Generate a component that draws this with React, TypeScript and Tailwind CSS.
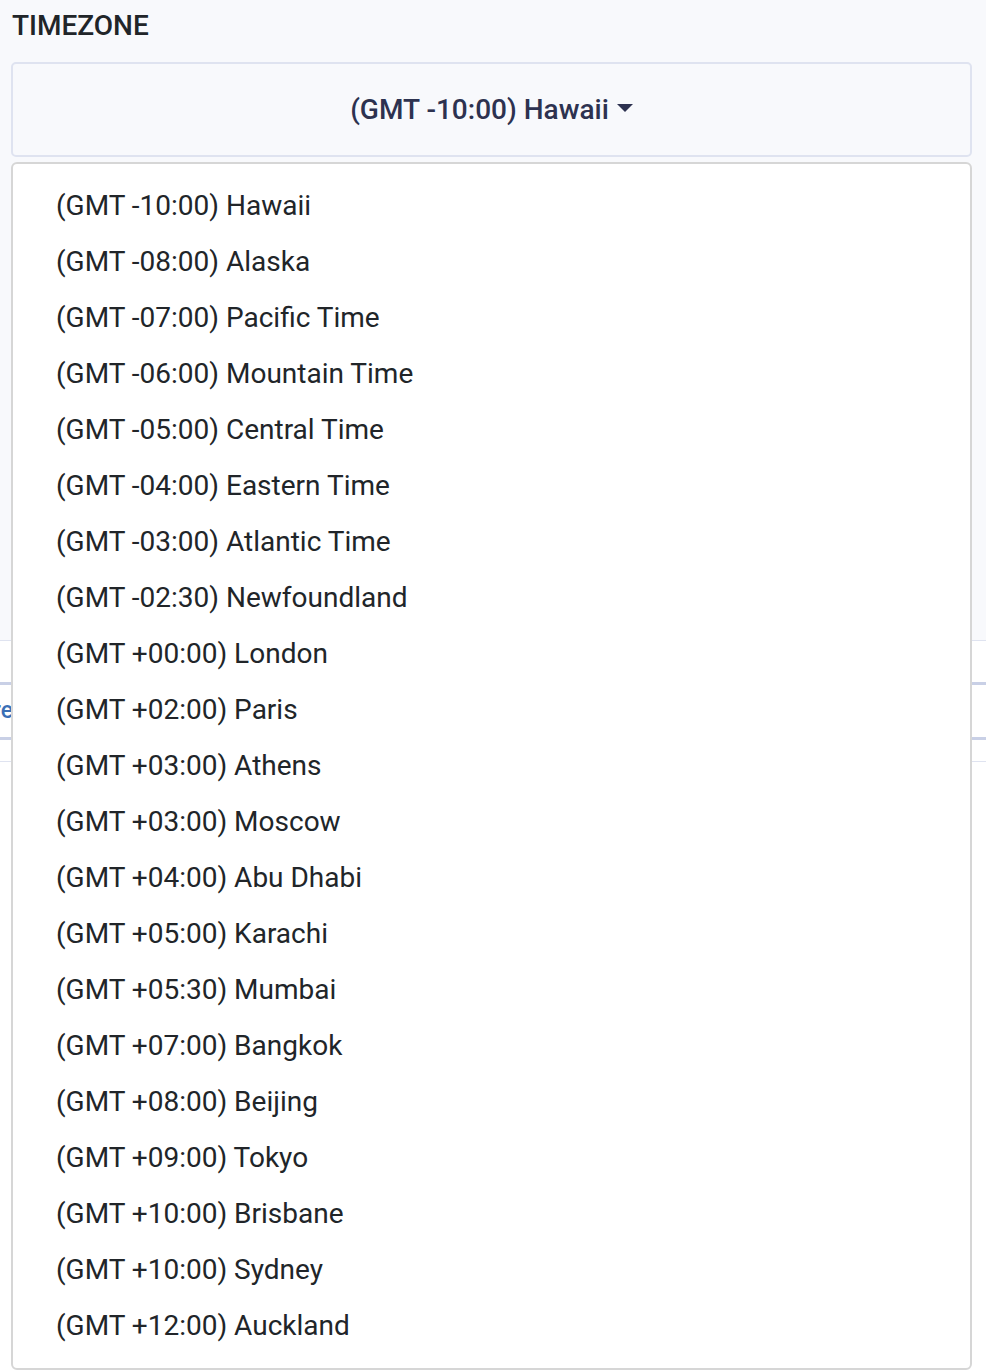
import React from "react";

const zones = [
  "(GMT -10:00) Hawaii",
  "(GMT -08:00) Alaska",
  "(GMT -07:00) Pacific Time",
  "(GMT -06:00) Mountain Time",
  "(GMT -05:00) Central Time",
  "(GMT -04:00) Eastern Time",
  "(GMT -03:00) Atlantic Time",
  "(GMT -02:30) Newfoundland",
  "(GMT +00:00) London",
  "(GMT +02:00) Paris",
  "(GMT +03:00) Athens",
  "(GMT +03:00) Moscow",
  "(GMT +04:00) Abu Dhabi",
  "(GMT +05:00) Karachi",
  "(GMT +05:30) Mumbai",
  "(GMT +07:00) Bangkok",
  "(GMT +08:00) Beijing",
  "(GMT +09:00) Tokyo",
  "(GMT +10:00) Brisbane",
  "(GMT +10:00) Sydney",
  "(GMT +12:00) Auckland",
];

export default function App() {
  return (
    <div
      className="relative min-h-[1370px] bg-white text-[#212529] overflow-hidden"
      style={{ fontFamily: "Roboto, 'Liberation Sans', sans-serif" }}
    >
      <div className="bg-[#f8f9fc] h-[641px] border-b border-[#dfe3f0] pl-[11px]">
        <h2 className="pt-[8px] h-[62px] text-[28px] font-medium leading-[36px] pl-px">TIMEZONE</h2>
        <button className="w-[961px] h-[95px] border-2 border-[#dfe3f0] rounded-[5px] flex items-center justify-center gap-2 text-[28px] font-medium text-[#2d3250]">
          <span>(GMT -10:00) Hawaii</span>
          <span className="w-0 h-0 border-x-[8px] border-x-transparent border-t-[8px] border-t-[#2d3250] mb-[3px]" />
        </button>
        <div className="w-[961px] mt-[88px] h-[145px] border border-[#b9bed6] rounded-[4px]" />
        <div className="w-[961px] mt-[60px] h-[147px] border border-[#b9bed6] rounded-[4px]" />
      </div>
      <div className="pt-[41px]">
        <div className="h-[58px] border-y-[3px] border-[#c9d0e6] flex items-center">
          <div className="w-[13px] flex justify-end whitespace-nowrap text-[23px] text-[#3b6fb6] font-medium">
            Restore
          </div>
        </div>
        <div className="mt-[21px] border-t border-[#dfe3f0]" />
      </div>

      <div className="absolute left-[11px] top-[162px] w-[961px] bg-white border-2 border-[#d6d6d6] rounded-[6px] py-[14px]">
        {zones.map((z) => (
          <div key={z} className="h-[56px] flex items-center pl-[43px] text-[28px] leading-none text-[#212529]">
            {z}
          </div>
        ))}
      </div>
    </div>
  );
}
